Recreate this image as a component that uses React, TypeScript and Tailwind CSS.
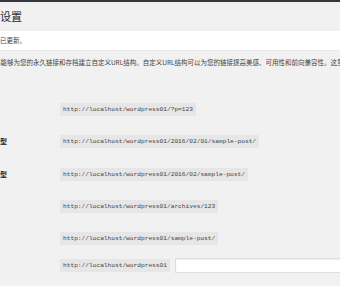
import React from 'react';

const cjk = "font-['Noto_Sans_CJK_SC','Noto_Sans',sans-serif]";
const mono = "font-['Liberation_Mono',monospace]";

interface PermalinkRow {
  label: string;
  example: string;
  custom?: boolean;
  height: string;
}

const rows: PermalinkRow[] = [
  { label: '朴素', example: 'http://localhost/wordpress01/?p=123', height: 'h-[32px]' },
  { label: '日期和名称型', example: 'http://localhost/wordpress01/2016/02/01/sample-post/', height: 'h-[33px]' },
  { label: '月份和名称型', example: 'http://localhost/wordpress01/2016/02/sample-post/', height: 'h-[32px]' },
  { label: '数字型', example: 'http://localhost/wordpress01/archives/123', height: 'h-[32px]' },
  { label: '文章名', example: 'http://localhost/wordpress01/sample-post/', height: 'h-[33px]' },
  { label: '自定义结构', example: 'http://localhost/wordpress01', custom: true, height: 'h-[20px]' },
];

export default function App(): JSX.Element {
  return (
    <div className={`w-[340px] h-[286px] overflow-hidden bg-[#f1f1f1] text-[#444] ${cjk}`}>
      <div className="h-[2px] bg-[#32373c]" />

      <div className="ml-[-42px] w-[600px]">
        <h1 className="ml-[-2px] pt-[7px] h-[29px] text-[11px] leading-[15px] text-[#23282d]">
          固定链接设置
        </h1>

        <div className="ml-[-4px] h-[19px] bg-white border-l-[2px] border-[#46b450] shadow-[0_1px_1px_rgba(0,0,0,0.04)] flex items-center pl-[5px]">
          <p className="text-[6.5px] leading-[9px]">固定链接结构已更新。</p>
        </div>

        <p className="mt-[8px] ml-[10px] text-[6.5px] leading-[9px] whitespace-nowrap">
          WordPress能够为您的永久链接和存档建立自定义URL结构。自定义URL结构可以为您的链接提高美感、可用性和前向兼容性。这里有一些可供您参考的标签。
        </p>

        <div className="mt-[26px] ml-[7px]">
          {rows.map((row) => (
            <div key={row.label} className={`flex items-center ${row.height}`}>
              <div className="w-[95px] shrink-0 text-[7px] font-bold text-[#23282d] whitespace-nowrap">
                {row.label}
              </div>
              <code
                className={`px-[3px] py-[3px] bg-[#e6e6e6] text-[6.2px] leading-[7px] text-[#444] whitespace-nowrap ${mono}`}
              >
                {row.example}
              </code>
              {row.custom ? (
                <input
                  type="text"
                  readOnly
                  value=""
                  className="ml-[5px] w-[200px] h-[15px] bg-white border border-[#ddd] shadow-[inset_0_1px_2px_rgba(0,0,0,0.07)] outline-none"
                />
              ) : null}
            </div>
          ))}
        </div>
      </div>
    </div>
  );
}
